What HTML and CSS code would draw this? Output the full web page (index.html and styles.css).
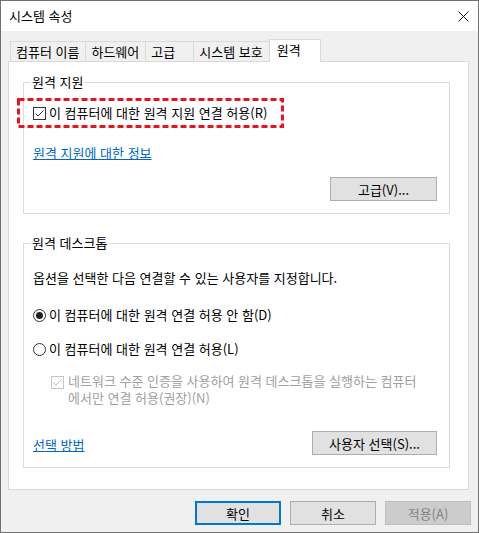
FILE: index.html
```html
<!DOCTYPE html>
<html lang="ko">
<head>
    <meta charset="UTF-8">
    <title>시스템 속성</title>
    <link rel="stylesheet" href="styles.css">
</head>
<body>
<div class="window">
    <div class="titlebar">
        <span class="title">시스템 속성</span>
        <svg class="close" viewBox="0 0 11 11" aria-hidden="true">
            <path d="M0.5 0.5L10.5 10.5M10.5 0.5L0.5 10.5" stroke="#111" stroke-width="1"/>
        </svg>
    </div>

    <div class="client">
        <div class="tabs">
            <div class="tab">컴퓨터 이름</div>
            <div class="tab">하드웨어</div>
            <div class="tab">고급</div>
            <div class="tab">시스템 보호</div>
            <div class="tab active">원격</div>
        </div>

        <div class="panel">
            <fieldset class="group group-assist">
                <legend>원격 지원</legend>
                <div class="option highlight">
                    <svg class="box" viewBox="0 0 13 13" aria-hidden="true">
                        <rect x="0.5" y="0.5" width="12" height="12" fill="#fff" stroke="#333"/>
                        <path d="M2.5 6.5L5 9L10.5 3.5" fill="none" stroke="#333"/>
                    </svg>
                    <span>이 컴퓨터에 대한 원격 지원 연결 허용(R)</span>
                    <svg class="mark" viewBox="0 0 267 30" aria-hidden="true">
                        <rect x="1.5" y="1.5" width="264" height="27" fill="none" stroke="#e8141e" stroke-width="3" stroke-dasharray="6 3"/>
                    </svg>
                </div>
                <div class="link-row"><a class="link" href="#">원격 지원에 대한 정보</a></div>
                <div class="actions">
                    <button class="btn btn-advanced">고급(V)...</button>
                </div>
            </fieldset>

            <fieldset class="group group-desktop">
                <legend>원격 데스크톱</legend>
                <p class="desc">옵션을 선택한 다음 연결할 수 있는 사용자를 지정합니다.</p>
                <div class="option radio-first">
                    <svg class="box" viewBox="0 0 13 13" aria-hidden="true">
                        <circle cx="6.5" cy="6.5" r="6" fill="#fff" stroke="#333"/>
                        <circle cx="6.5" cy="6.5" r="3.5" fill="#222"/>
                    </svg>
                    <span>이 컴퓨터에 대한 원격 연결 허용 안 함(D)</span>
                </div>
                <div class="option radio-second">
                    <svg class="box" viewBox="0 0 13 13" aria-hidden="true">
                        <circle cx="6.5" cy="6.5" r="6" fill="#fff" stroke="#333"/>
                    </svg>
                    <span>이 컴퓨터에 대한 원격 연결 허용(L)</span>
                </div>
                <div class="option sub disabled">
                    <svg class="box" viewBox="0 0 13 13" aria-hidden="true">
                        <rect x="0.5" y="0.5" width="12" height="12" fill="#fff" stroke="#c4c4c4"/>
                        <path d="M2.5 6.5L5 9L10.5 3.5" fill="none" stroke="#b8b8b8"/>
                    </svg>
                    <span>네트워크 수준 인증을 사용하여 원격 데스크톱을 실행하는 컴퓨터<br>에서만 연결 허용(권장)(N)</span>
                </div>
                <div class="actions split">
                    <a class="link" href="#">선택 방법</a>
                    <button class="btn btn-users">사용자 선택(S)...</button>
                </div>
            </fieldset>
        </div>

        <div class="buttons">
            <button class="btn btn-dialog default">확인</button>
            <button class="btn btn-dialog">취소</button>
            <button class="btn btn-dialog" disabled>적용(A)</button>
        </div>
    </div>
</div>
</body>
</html>
```

FILE: styles.css
```css
* {
    box-sizing: border-box;
}

body {
    margin: 0;
    font-family: "Noto Sans CJK KR", "Noto Sans", sans-serif;
    font-size: 13px;
    color: #000;
    background: #f0f0f0;
}

.window {
    width: 479px;
    height: 533px;
    border: 1px solid #707070;
    background: #f0f0f0;
}

.titlebar {
    height: 30px;
    background: #fff;
    display: flex;
    align-items: center;
    justify-content: space-between;
    padding: 0 9px 0 8px;
    line-height: 16px;
}

.close {
    width: 11px;
    height: 11px;
}

.client {
    padding: 8px 7px 0 7px;
}

/* tab strip */
.tabs {
    display: flex;
    align-items: flex-end;
    padding-left: 2px;
}

.tab {
    height: 20px;
    min-width: 49px;
    padding: 0 6px 0 5px;
    margin-right: -1px;
    border: 1px solid #d9d9d9;
    border-bottom: 0;
    background: #f0f0f0;
    line-height: 19px;
    white-space: nowrap;
}

.tab.active {
    position: relative;
    z-index: 1;
    height: 23px;
    min-width: 52px;
    margin: 0 -2px -1px 0;
    padding: 0 8px 0 7px;
    background: #fff;
    line-height: 20px;
}

.panel {
    width: 461px;
    height: 429px;
    border: 1px solid #d9d9d9;
    background: #fff;
    padding: 12px 18px 0 14px;
}

/* group boxes */
.group {
    margin: 0;
    border: 1px solid #dcdcdc;
    padding: 15px 12px 12px 9px;
    min-width: 0;
}

.group legend {
    padding: 0 2px;
    margin-left: -3px;
    line-height: 16px;
}

.group-desktop {
    margin-top: 21px;
    padding-top: 19px;
}

.option {
    display: flex;
    align-items: center;
    gap: 3px;
    line-height: 16px;
}

.box {
    width: 13px;
    height: 13px;
    flex: none;
}

.highlight {
    position: relative;
}

.mark {
    position: absolute;
    left: -16px;
    top: -7px;
    width: 267px;
    height: 30px;
}

.link-row {
    margin-top: 24px;
    line-height: 16px;
}

.link {
    color: #0066cc;
    text-decoration: underline;
}

.actions {
    display: flex;
    justify-content: flex-end;
    margin-top: 16px;
}

.actions.split {
    justify-content: space-between;
    align-items: center;
    margin-top: 25px;
    line-height: 16px;
}

.actions.split .link {
    padding-top: 3px;
}

.desc {
    margin: 0;
    line-height: 16px;
}

.radio-first {
    margin-top: 21px;
}

.radio-second {
    margin-top: 18px;
}

.option.sub {
    align-items: flex-start;
    margin-top: 15px;
    margin-left: 18px;
    gap: 4px;
    line-height: 17px;
}

.option.sub .box {
    margin-top: 4px;
}

.disabled {
    color: #a0a0a0;
}

/* push buttons */
.btn {
    font-family: inherit;
    font-size: 13px;
    color: #000;
    height: 24px;
    padding: 0;
    background: #e1e1e1;
    border: 1px solid #adadad;
}

.btn-advanced {
    width: 107px;
}

.btn-users {
    width: 125px;
}

.buttons {
    display: flex;
    justify-content: flex-end;
    gap: 9px;
    margin-top: 11px;
}

.btn-dialog {
    width: 86px;
}

.btn-dialog.default {
    border: 2px solid #0078d7;
}

.btn-dialog:disabled {
    background: #cccccc;
    border-color: #bfbfbf;
    color: #838383;
}
```
